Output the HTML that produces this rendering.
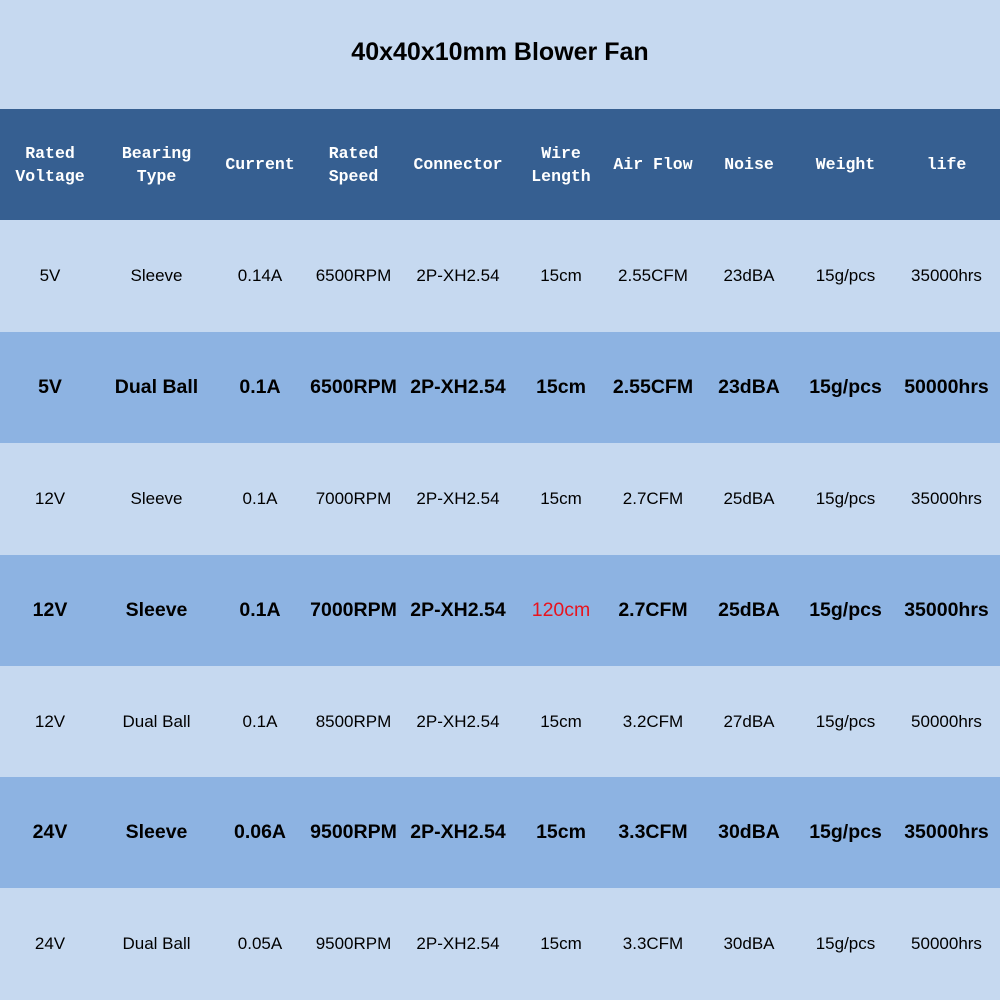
<!DOCTYPE html>
<html><head><meta charset="utf-8"><style>
body{margin:0;width:1000px;height:1000px;overflow:hidden;background:#c6d9f0;font-family:"Liberation Sans",sans-serif;}
.title{height:109px;display:flex;align-items:center;justify-content:center;font-weight:bold;font-size:25px;color:#000;padding-bottom:4px;box-sizing:border-box}
table{border-collapse:collapse;width:1000px;table-layout:fixed}
td{text-align:center;padding:0;white-space:nowrap}
tr.h td{background:#365f91;color:#fff;font-family:"Liberation Mono","DejaVu Sans Mono",monospace;font-weight:bold;font-size:16.5px;line-height:23px;height:111px}
tr.l td{background:#c6d9f0;font-size:17px;height:111px;color:#000}
tr.d td{background:#8db3e2;font-size:19.5px;font-weight:bold;height:111px;color:#000}
tr.x td{height:112px}
tr td.red{color:#e8141e;font-weight:normal}
</style></head><body>
<div class="title">40x40x10mm Blower Fan</div>
<table>
<colgroup><col style="width:100px"><col style="width:113px"><col style="width:94px"><col style="width:93px"><col style="width:116px"><col style="width:90px"><col style="width:94px"><col style="width:98px"><col style="width:95px"><col style="width:107px"></colgroup>
<tr class="h"><td>Rated<br>Voltage</td><td>Bearing<br>Type</td><td>Current</td><td>Rated<br>Speed</td><td>Connector</td><td>Wire<br>Length</td><td>Air Flow</td><td>Noise</td><td>Weight</td><td>life</td></tr>
<tr class="l x"><td>5V</td><td>Sleeve</td><td>0.14A</td><td>6500RPM</td><td>2P-XH2.54</td><td>15cm</td><td>2.55CFM</td><td>23dBA</td><td>15g/pcs</td><td>35000hrs</td></tr>
<tr class="d"><td>5V</td><td>Dual Ball</td><td>0.1A</td><td>6500RPM</td><td>2P-XH2.54</td><td>15cm</td><td>2.55CFM</td><td>23dBA</td><td>15g/pcs</td><td>50000hrs</td></tr>
<tr class="l x"><td>12V</td><td>Sleeve</td><td>0.1A</td><td>7000RPM</td><td>2P-XH2.54</td><td>15cm</td><td>2.7CFM</td><td>25dBA</td><td>15g/pcs</td><td>35000hrs</td></tr>
<tr class="d"><td>12V</td><td>Sleeve</td><td>0.1A</td><td>7000RPM</td><td>2P-XH2.54</td><td class="red">120cm</td><td>2.7CFM</td><td>25dBA</td><td>15g/pcs</td><td>35000hrs</td></tr>
<tr class="l"><td>12V</td><td>Dual Ball</td><td>0.1A</td><td>8500RPM</td><td>2P-XH2.54</td><td>15cm</td><td>3.2CFM</td><td>27dBA</td><td>15g/pcs</td><td>50000hrs</td></tr>
<tr class="d"><td>24V</td><td>Sleeve</td><td>0.06A</td><td>9500RPM</td><td>2P-XH2.54</td><td>15cm</td><td>3.3CFM</td><td>30dBA</td><td>15g/pcs</td><td>35000hrs</td></tr>
<tr class="l x"><td>24V</td><td>Dual Ball</td><td>0.05A</td><td>9500RPM</td><td>2P-XH2.54</td><td>15cm</td><td>3.3CFM</td><td>30dBA</td><td>15g/pcs</td><td>50000hrs</td></tr>
</table>
</body></html>
